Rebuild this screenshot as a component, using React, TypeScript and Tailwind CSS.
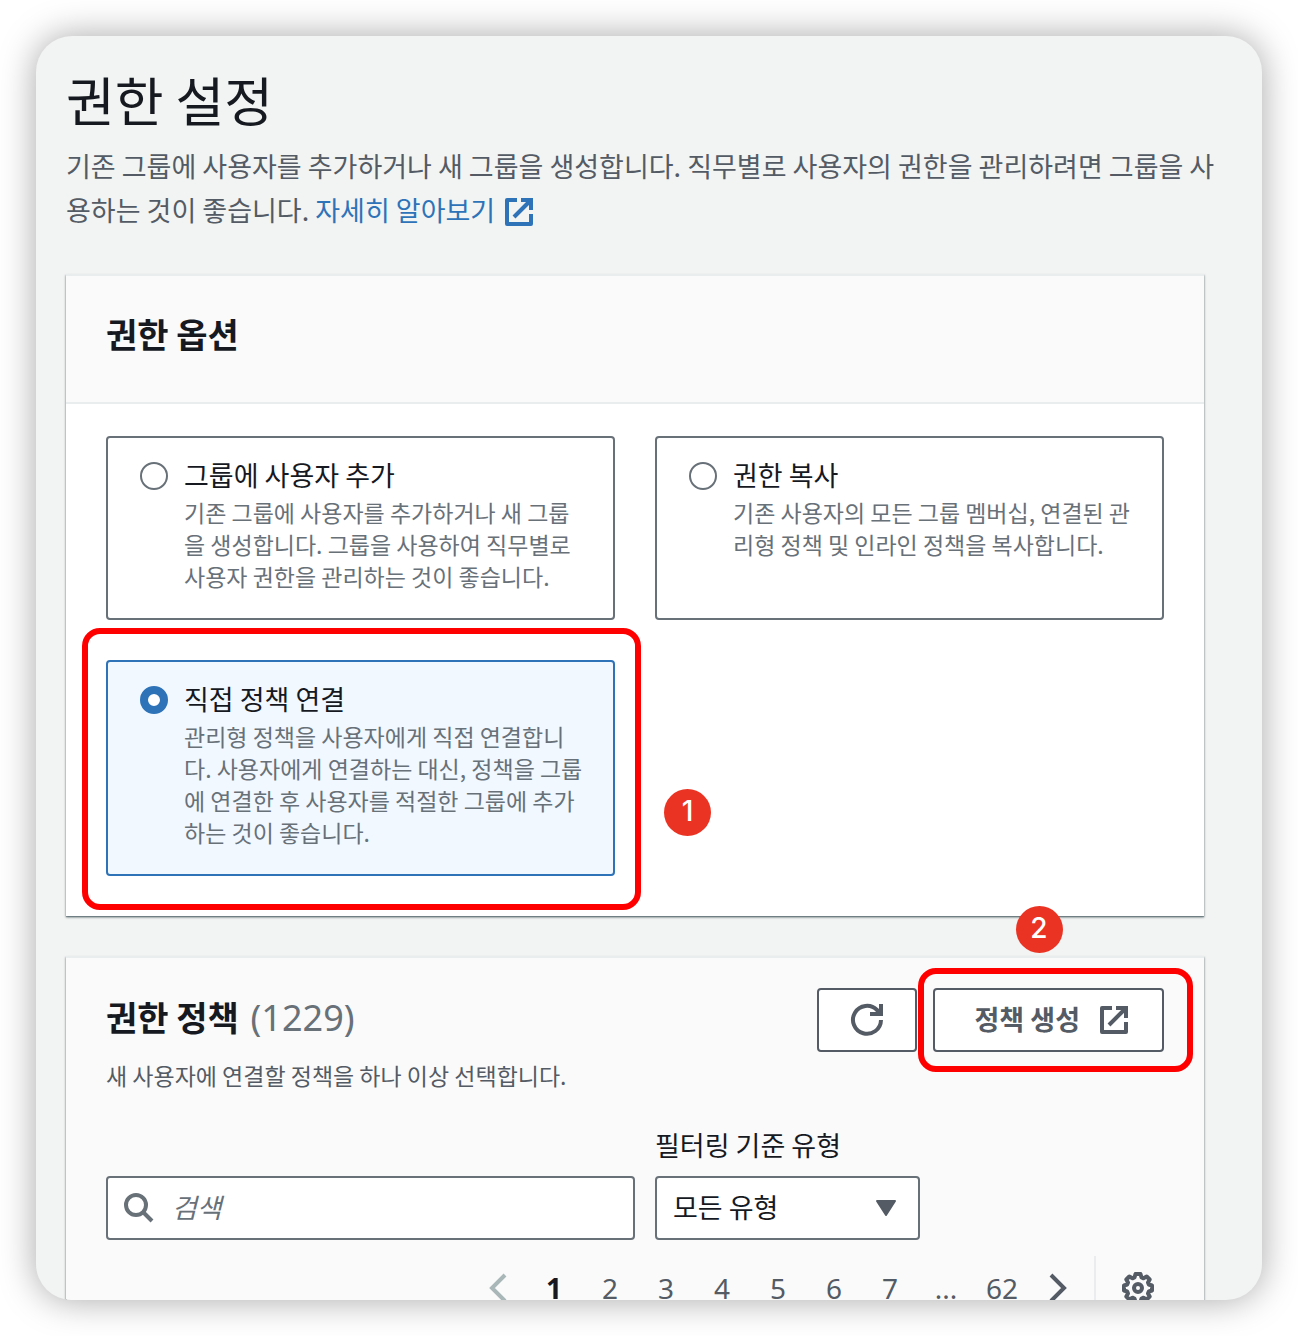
import React, { useState } from "react";

const ExternalIcon = ({ className = "" }: { className?: string }) => (
  <svg viewBox="0 0 32 32" className={`h-8 w-8 shrink-0 ${className}`} fill="none" stroke="currentColor" strokeWidth="4" aria-hidden="true">
    <path d="M14 4H4v24h24V18" strokeLinejoin="round" />
    <path d="M18 4h10v10" />
    <path d="M28 4 11 21" />
  </svg>
);

const RefreshIcon = () => (
  <svg viewBox="0 0 36 36" className="h-9 w-9" fill="none" stroke="currentColor" strokeWidth="4" aria-hidden="true">
    <path d="M32 18a14 14 0 1 1-4-10l4 4" />
    <path d="M32 2v10H21" />
  </svg>
);

const SearchIcon = () => (
  <svg viewBox="0 0 32 32" className="h-8 w-8 shrink-0" fill="none" stroke="currentColor" strokeWidth="4" aria-hidden="true">
    <circle cx="14" cy="13" r="10" />
    <path d="M21 20l9 9" />
  </svg>
);

const GearIcon = () => (
  <svg viewBox="0 0 32 32" className="h-8 w-8" fill="none" stroke="currentColor" strokeWidth="4" strokeLinejoin="round" aria-hidden="true">
    <path d="M13.5 2h5l1 3.5 2 .8 3.200-1.800 3 3L26 10.500l.8 2 3.200 1v5l-3.200 1-.8 2 1.700 3-3 3-3.200-1.800-2 .8-1 3.500h-5l-1-3.500-2-.8-3.200 1.800-3-3L6 21.500l-.8-2L2 18.500v-5l3.200-1 .8-2-1.700-3 3-3 3.200 1.800 2-.8z" />
    <circle cx="16" cy="16" r="4" />
  </svg>
);

const Chevron = ({ flip }: { flip?: boolean }) => (
  <svg viewBox="0 0 20 32" className="h-8 w-5" fill="none" stroke="currentColor" strokeWidth="4" aria-hidden="true">
    <path d={flip ? "M3 3l13 13L3 29" : "M17 3 4 16l13 13"} />
  </svg>
);

const Badge = ({ n, className }: { n: number; className: string }) => (
  <span className={`absolute flex h-[47px] w-[47px] justify-center rounded-full bg-[#eb3323] font-[Inter] text-[28px] leading-[44px] font-medium text-white ${className}`}>
    {n}
  </span>
);

const options = [
  { id: "group", title: "그룹에 사용자 추가", text: "기존 그룹에 사용자를 추가하거나 새 그룹을 생성합니다. 그룹을 사용하여 직무별로 사용자 권한을 관리하는 것이 좋습니다." },
  { id: "copy", title: "권한 복사", text: "기존 사용자의 모든 그룹 멤버십, 연결된 관리형 정책 및 인라인 정책을 복사합니다." },
  { id: "direct", title: "직접 정책 연결", text: "관리형 정책을 사용자에게 직접 연결합니다. 사용자에게 연결하는 대신, 정책을 그룹에 연결한 후 사용자를 적절한 그룹에 추가하는 것이 좋습니다." },
];

const cardShadow = "shadow-[0_1px_1px_0_rgba(0,28,36,0.3),1px_1px_2px_0_rgba(0,28,36,0.15),-1px_1px_2px_0_rgba(0,28,36,0.15),0_2px_2px_0_rgba(0,28,36,0.2)] border-t-2 border-[#eaeded]";

export default function App() {
  const [selected, setSelected] = useState("direct");
  return (
    <div className="h-screen bg-white p-9 font-['Noto_Sans_CJK_KR',sans-serif] text-[27px] text-[#16191f]">
      <main className="h-full overflow-hidden rounded-[36px] bg-[#f2f4f3] pt-[27px] pr-[58px] pl-[30px] shadow-[0_0_36px_rgba(0,0,0,0.35)]">
        <h1 className="text-[53px] leading-[72px]">권한 설정</h1>
        <p className="mt-[9px] -mr-4 leading-[44px] text-[#545b64]">
          기존 그룹에 사용자를 추가하거나 새 그룹을 생성합니다. 직무별로 사용자의 권한을 관리하려면 그룹을 사용하는 것이 좋습니다.{" "}
          <a href="#learn-more" className="text-[#2e73b8]">
            자세히 알아보기
            <ExternalIcon className="ml-2 inline-block align-[-7px]" />
          </a>
        </p>

        <section className={`mt-[42px] bg-white ${cardShadow}`}>
          <header className="border-b-2 border-[#eaeded] bg-[#fafafa] px-10 pt-[34px] pb-11">
            <h2 className="text-[34px] leading-[48px] font-bold">권한 옵션</h2>
          </header>
          <div className="grid grid-cols-2 gap-10 px-10 pt-8 pb-10">
            {options.map((o) => (
              <div key={o.id} className="relative">
                <label
                  htmlFor={o.id}
                  className={`flex h-full gap-4 rounded-[4px] border-2 pt-4 pr-[26px] pb-[26px] pl-8 ${selected === o.id ? "border-[#2e73b8] bg-[#f1f8ff]" : "border-[#687078] bg-white"}`}
                >
                  <input
                    id={o.id}
                    type="radio"
                    name="option"
                    checked={selected === o.id}
                    onChange={() => setSelected(o.id)}
                    className="mt-2 h-7 w-7 shrink-0 appearance-none rounded-full border-2 border-[#687078] bg-white checked:border-8 checked:border-[#2e73b8]"
                  />
                  <span className="flex flex-col">
                    <span className="leading-[42px]">{o.title}</span>
                    <span className="text-[23px] leading-8 text-[#687078]">{o.text}</span>
                  </span>
                </label>
                {o.id === "direct" && (
                  <>
                    <span className="pointer-events-none absolute -top-8 -right-[26px] -bottom-[34px] -left-6 rounded-[18px] border-6 border-[#ff0000]" />
                    <Badge n={1} className="top-[129px] left-[558px]" />
                  </>
                )}
              </div>
            ))}
          </div>
        </section>

        <section className={`mt-10 bg-[#fafafa] px-10 pt-[30px] ${cardShadow}`}>
          <div className="flex items-start justify-between">
            <div>
              <h2 className="text-[34px] leading-[58px] font-bold">
                권한 정책 <span className="ml-1 font-['Noto_Sans'] text-[36px] font-normal text-[#687078]">(1229)</span>
              </h2>
              <p className="mt-3 text-[23px] leading-8 text-[#545b64]">새 사용자에 연결할 정책을 하나 이상 선택합니다.</p>
            </div>
            <div className="flex gap-4 text-[#545b64]">
              <button type="button" aria-label="새로 고침" className="flex h-16 w-[100px] items-center justify-center rounded-[4px] border-2 border-[#545b64] bg-white">
                <RefreshIcon />
              </button>
              <div className="relative">
                <button type="button" className="flex h-16 items-center gap-[18px] rounded-[4px] border-2 border-[#545b64] bg-white pr-8 pl-10 font-bold">
                  <span className="pb-0.5">정책 생성</span>
                  <ExternalIcon />
                </button>
                <span className="pointer-events-none absolute -top-5 -right-[29px] -bottom-5 -left-[15px] rounded-[18px] border-6 border-[#ff0000]" />
                <Badge n={2} className="-top-[82px] left-[83px]" />
              </div>
            </div>
          </div>

          <div className="mt-8 flex items-end gap-5">
            <div className="flex h-16 flex-1 items-center gap-[18px] rounded-[4px] border-2 border-[#687078] bg-white px-[14px] text-[#687078]">
              <SearchIcon />
              <input type="text" aria-label="검색" placeholder="검색" className="min-w-0 flex-1 bg-transparent pb-0.5 italic outline-none placeholder:text-[#687078]" />
            </div>
            <div className="mr-[244px] w-[265px]">
              <label htmlFor="type" className="block leading-[44px]">필터링 기준 유형</label>
              <div className="relative mt-[9px]">
                <select id="type" className="h-16 w-full appearance-none rounded-[4px] border-2 border-[#687078] bg-white pb-0.5 pl-4">
                  <option>모든 유형</option>
                </select>
                <svg viewBox="0 0 22 18" className="pointer-events-none absolute top-[23px] right-[23px] h-[18px] w-[22px] text-[#545b64]" fill="currentColor" aria-hidden="true">
                  <path d="M2 2h18l-9 14z" stroke="currentColor" strokeWidth="2" strokeLinejoin="round" />
                </svg>
              </div>
            </div>
          </div>

          <div className="mt-4 flex h-16 justify-end font-['Noto_Sans'] text-[28px] text-[#545b64]">
            <nav aria-label="페이지" className="flex items-center">
              <button type="button" aria-label="이전" className="flex w-14 justify-center text-[#aab7b8]"><Chevron /></button>
              {["1", "2", "3", "4", "5", "6", "7", "..."].map((p) =>
                p === "..." ? (
                  <span key={p} className="w-14 text-center">{p}</span>
                ) : (
                  <button key={p} type="button" className={`w-14 ${p === "1" ? "font-bold text-[#16191f]" : ""}`}>{p}</button>
                )
              )}
              <button type="button" className="w-14">62</button>
              <button type="button" aria-label="다음" className="flex w-14 justify-center"><Chevron flip /></button>
            </nav>
            <div className="ml-2 flex items-center border-l-2 border-[#eaeded] pr-[10px] pl-[26px]">
              <button type="button" aria-label="설정"><GearIcon /></button>
            </div>
          </div>
        </section>
      </main>
    </div>
  );
}
